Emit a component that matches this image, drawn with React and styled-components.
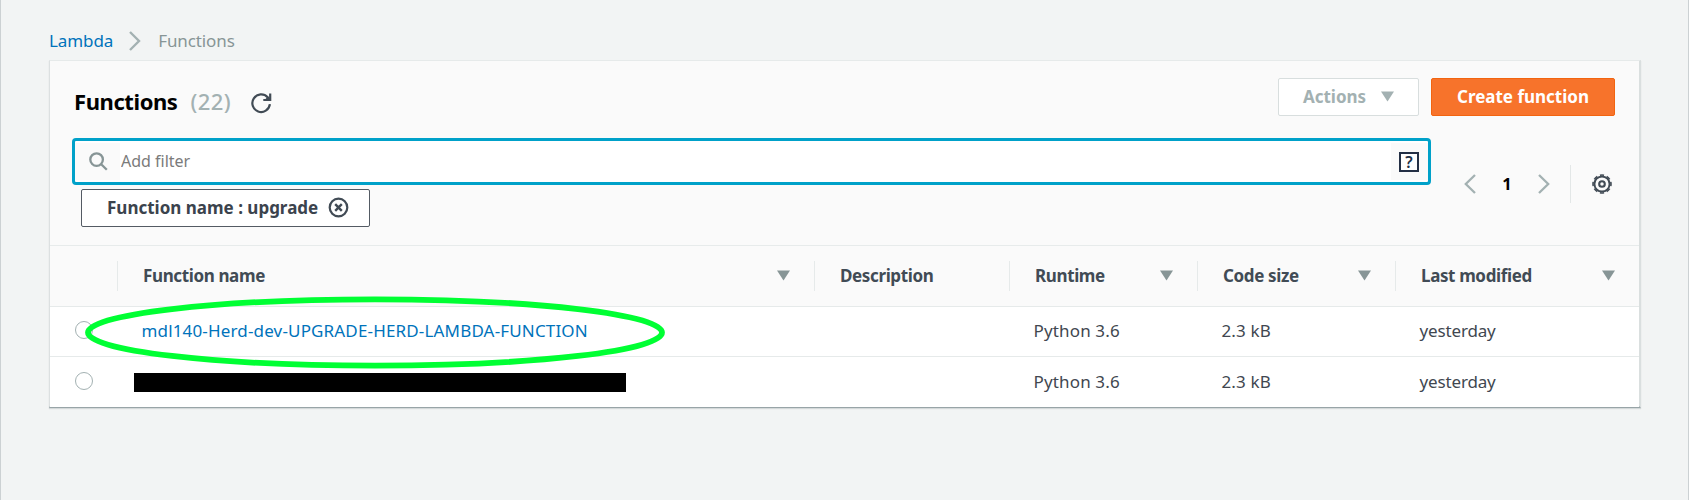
import React from 'react';
import styled, { createGlobalStyle } from 'styled-components';

const GlobalStyle = createGlobalStyle`
  * { box-sizing: border-box; }
  body {
    margin: 0;
    background: #f2f4f4;
    color: #414750;
    font: 400 17px/24px "Noto Sans", sans-serif;
  }
`;

const Page = styled.div`
  height: 500px;
  overflow: hidden;
  padding: 29px 47px 0 48px;
  border-left: 1px solid #ccd1d3;
  border-right: 1px solid #ccd1d3;
`;

const Breadcrumbs = styled.nav`
  display: flex;
  align-items: center;
  height: 24px;
  margin-bottom: 7px;
`;

const Crumb = styled.span`
  color: ${(p) => (p.$link ? '#0073bb' : '#879596')};
  letter-spacing: -0.1px;
`;

const CrumbArrow = styled.svg`
  margin: 0 17px 0 16px;
`;

const Card = styled.section`
  position: relative;
  height: 348px;
  border: 1px solid #e6eaea;
  border-left-color: #dce0e1;
  border-right: 2px solid #dadfdf;
  border-bottom: 2px solid #98a4a7;
  background: #fff;
  box-shadow: 0 1px 1px rgba(0, 28, 36, 0.12);
`;

const CardHeader = styled.header`
  height: 185px;
  padding: 17px 24px 0 23px;
  background: #fafafa;
  border-bottom: 1px solid #e7ebeb;
`;

const TitleBar = styled.div`
  display: flex;
  justify-content: space-between;
  height: 60px;
`;

const Title = styled.h1`
  display: flex;
  align-items: center;
  height: 46px;
  margin: 0 0 0 1px;
  color: #000;
  font-size: 22px;
  font-weight: 700;
  line-height: 46px;
  letter-spacing: -0.42px;
  svg { margin-top: 3px; }
`;

const Counter = styled.span`
  margin: 0 20px 0 13px;
  color: #a3b1b2;
  font-weight: 500;
  letter-spacing: 0.4px;
`;

const ButtonGroup = styled.div`
  display: flex;
  gap: 12px;
`;

const Button = styled.button`
  display: flex;
  align-items: center;
  justify-content: center;
  gap: 15px;
  width: ${(p) => (p.$primary ? '184px' : '141px')};
  height: 38px;
  padding: 0 0 1px;
  border: 1px solid ${(p) => (p.$primary ? '#f26410' : '#d8dede')};
  border-radius: 2px;
  background: ${(p) => (p.$primary ? '#f7732b' : '#fff')};
  color: ${(p) => (p.$primary ? '#fff' : '#a3b1b2')};
  font: 700 17px/24px "Noto Sans", sans-serif;
`;

const FilterBar = styled.div`
  display: flex;
  justify-content: space-between;
`;

const FilterColumn = styled.div`
  width: 1359px;
  margin-left: -1px;
`;

const SearchBox = styled.label`
  display: flex;
  align-items: center;
  justify-content: space-between;
  height: 47px;
  border: 3px solid #00a1c9;
  border-radius: 4px;
  background: #fff;
`;

const SearchInput = styled.input`
  flex: 1;
  height: 36px;
  padding: 0 0 1px 1px;
  border: 0;
  outline: 0;
  background: #fff;
  font: 400 16px/22px "Noto Sans", sans-serif;
  &::placeholder { color: #7b7b7b; opacity: 1; }
`;

const SearchAddon = styled.span`
  display: flex;
  align-items: center;
  width: ${(p) => p.$width};
  height: 37px;
  padding-left: ${(p) => p.$inset};
  background: #fafafa;
`;

const HelpBox = styled.span`
  width: 20px;
  height: 20px;
  border: 2px solid #232f45;
  color: #232f45;
  background: #fff;
  font-size: 16px;
  font-weight: 600;
  line-height: 16px;
  text-align: center;
`;

const FilterTag = styled.div`
  display: flex;
  align-items: center;
  gap: 10px;
  width: 289px;
  height: 38px;
  margin: 4px 0 0 9px;
  padding: 0 0 1px 25px;
  border: 1px solid #545b64;
  border-radius: 2px;
  background: #fff;
  color: #3b434d;
  font-weight: 700;
`;

const Pager = styled.div`
  display: flex;
  align-items: center;
  height: 38px;
  margin-top: 27px;
  padding-right: 3px;
`;

const PageNumber = styled.span`
  width: 62px;
  color: #000;
  font-size: 16.5px;
  font-weight: 700;
  text-align: center;
`;

const PagerDivider = styled.span`
  width: 1px;
  height: 38px;
  margin: 0 21px 0 20px;
  background: #e3e7e7;
`;

const Row = styled.div`
  display: grid;
  grid-template-columns: 67px 697px 195px 188px 198px 1fr;
  align-items: center;
  height: ${(p) => (p.$head ? '61px' : '50px')};
  border-bottom: ${(p) => (p.$last ? '0' : '1px solid #e6eaea')};
  background: ${(p) => (p.$head ? '#fafafa' : '#fff')};
`;

const HeadCell = styled.div`
  display: flex;
  align-items: center;
  justify-content: space-between;
  height: 30px;
  padding: 0 24px 1px 25px;
  border-left: ${(p) => (p.$first ? '0' : '1px solid #e6eaea')};
  color: #414b55;
  font-weight: 700;
  letter-spacing: -0.37px;
  white-space: nowrap;
`;

const Cell = styled.div`
  padding-left: 24.5px;
  padding-bottom: 1px;
  letter-spacing: ${(p) => p.$tracking || '0'};
  color: #414750;
`;

const FunctionLink = styled.a`
  color: #0073bb;
  letter-spacing: 0.16px;
`;

const Radio = styled.span`
  display: block;
  width: 18px;
  height: 18px;
  margin: 0 0 3px 25px;
  border: 1px solid #a3b1b2;
  border-radius: 50%;
  background: #fff;
`;

const Redaction = styled.span`
  display: block;
  width: 492px;
  height: 19px;
  margin: 1px 0 0 -7.5px;
  background: #000;
`;

const Highlight = styled.svg`
  position: absolute;
  left: 34px;
  top: 234px;
  pointer-events: none;
`;

const Caret = ({ color = '#879596' }) => (
  <svg width="13" height="11" viewBox="0 0 13 11">
    <path d="M0 0.5h13L6.5 10.5z" fill={color} />
  </svg>
);

const Chevron = ({ left }) => (
  <svg width="12" height="20" viewBox="0 0 12 20" fill="none" stroke="#a3b1b2" strokeWidth="2.3">
    <path d={left ? 'M11 1L1.8 10L11 19' : 'M1 1L10.2 10L1 19'} />
  </svg>
);

const RefreshIcon = () => (
  <svg width="21" height="22" viewBox="0 0 21 22" fill="none" stroke="#414b55" strokeWidth="2.2">
    <path d="M18.9 12.2A8.8 8.8 0 1 1 16.6 5.2L19.2 7.8" />
    <path d="M19.2 1.5V8H12.3" />
    <path d="M19.2 7.8L14.2 7.5L17 4z" fill="#414b55" stroke="none" />
  </svg>
);

const SearchIcon = () => (
  <svg width="19" height="19" viewBox="0 0 19 19" fill="none" stroke="#879596" strokeWidth="2.3">
    <circle cx="7.6" cy="7.6" r="6.3" />
    <path d="M12.2 12.2L17.8 17.8" />
  </svg>
);

const RemoveIcon = () => (
  <svg width="21" height="21" viewBox="0 0 21 21" fill="none" stroke="#414b55" strokeWidth="2.2">
    <circle cx="10.5" cy="10.5" r="8.8" />
    <path d="M7.2 7.2L13.8 13.8M13.8 7.2L7.2 13.8" strokeWidth="2.4" />
  </svg>
);

const GearIcon = () => (
  <svg width="20" height="20" viewBox="0 0 20 20" fill="none" stroke="#414b55">
    <circle cx="10" cy="10" r="7.6" strokeWidth="2" />
    <circle cx="10" cy="10" r="9" strokeWidth="1.6" pathLength="80" strokeDasharray="6 4" strokeDashoffset="3" />
    <circle cx="10" cy="10" r="2.8" strokeWidth="2.1" />
  </svg>
);

const columns = [
  { label: 'Function name', sortable: true },
  { label: 'Description' },
  { label: 'Runtime', sortable: true },
  { label: 'Code size', sortable: true },
  { label: 'Last modified', sortable: true },
];

const functions = [
  { name: 'mdl140-Herd-dev-UPGRADE-HERD-LAMBDA-FUNCTION', runtime: 'Python 3.6', size: '2.3 kB', modified: 'yesterday' },
  { name: null, runtime: 'Python 3.6', size: '2.3 kB', modified: 'yesterday' },
];

export default function App() {
  return (
    <Page>
      <GlobalStyle />
      <Breadcrumbs>
        <Crumb $link>Lambda</Crumb>
        <CrumbArrow width="12" height="20" viewBox="0 0 12 20" fill="none" stroke="#a3b1b2" strokeWidth="2.4">
          <path d="M1 1L10 10L1 19" />
        </CrumbArrow>
        <Crumb>Functions</Crumb>
      </Breadcrumbs>
      <Card>
        <CardHeader>
          <TitleBar>
            <Title>
              Functions <Counter>(22)</Counter>
              <RefreshIcon />
            </Title>
            <ButtonGroup>
              <Button>Actions <Caret color="#a3b1b2" /></Button>
              <Button $primary>Create function</Button>
            </ButtonGroup>
          </TitleBar>
          <FilterBar>
            <FilterColumn>
              <SearchBox>
                <SearchAddon $width="45px" $inset="14px"><SearchIcon /></SearchAddon>
                <SearchInput placeholder="Add filter" />
                <SearchAddon $width="37px" $inset="8px"><HelpBox>?</HelpBox></SearchAddon>
              </SearchBox>
              <FilterTag>Function name : upgrade <RemoveIcon /></FilterTag>
            </FilterColumn>
            <Pager>
              <Chevron left />
              <PageNumber>1</PageNumber>
              <Chevron />
              <PagerDivider />
              <GearIcon />
            </Pager>
          </FilterBar>
        </CardHeader>
        <Row $head>
          <HeadCell $first />
          {columns.map((c) => (
            <HeadCell key={c.label}>
              {c.label}
              {c.sortable && <Caret />}
            </HeadCell>
          ))}
        </Row>
        {functions.map((f, i) => (
          <Row key={i} $last={i === functions.length - 1}>
            <Radio />
            <Cell>{f.name ? <FunctionLink>{f.name}</FunctionLink> : <Redaction />}</Cell>
            <Cell />
            <Cell $tracking="0.15px">{f.runtime}</Cell>
            <Cell $tracking="0.15px">{f.size}</Cell>
            <Cell $tracking="-0.15px">{f.modified}</Cell>
          </Row>
        ))}
        <Highlight width="582" height="75" viewBox="0 0 582 75">
          <ellipse cx="291" cy="37.5" rx="287" ry="33.2" fill="none" stroke="#00ff33" strokeWidth="5.8" />
        </Highlight>
      </Card>
    </Page>
  );
}
